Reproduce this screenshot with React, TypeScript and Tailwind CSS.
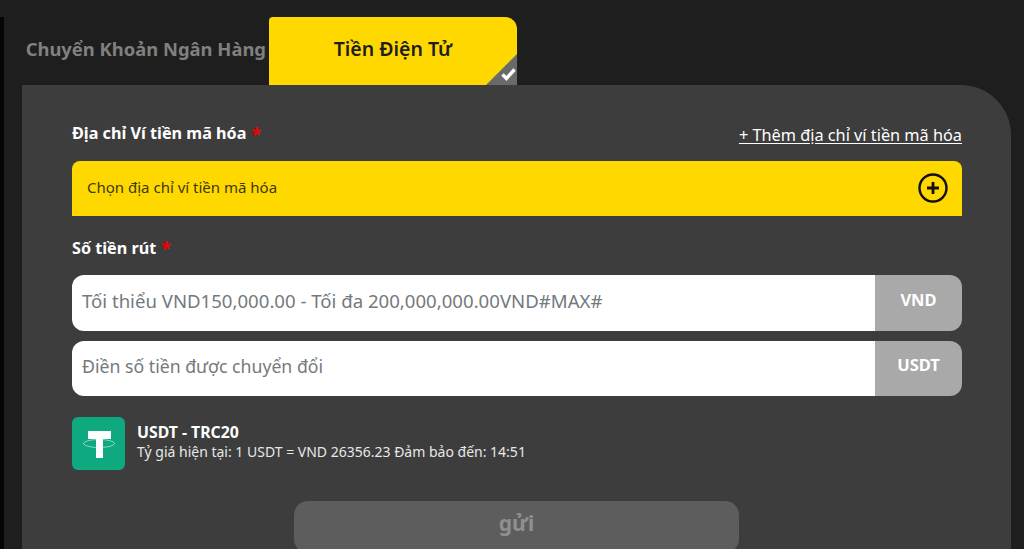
import React from "react";

function TetherLogo() {
  return (
    <div className="w-[53px] h-[53px] rounded-[6px] bg-[#0fa97f] flex items-center justify-center shrink-0">
      <svg width="53" height="53" viewBox="0 0 53 53" fill="none">
        <ellipse cx="27" cy="26.5" rx="15.5" ry="4" stroke="#fff" strokeOpacity="0.5" strokeWidth="1" />
        <path d="M16 14h23v8h-8v19h-7V22h-8z" fill="#fff" />
      </svg>
    </div>
  );
}

function AmountRow({
  placeholder,
  unit,
  height,
  textSize,
}: {
  placeholder: string;
  unit: string;
  height: string;
  textSize: string;
}) {
  return (
    <div className={`flex rounded-[12px] overflow-hidden ${height}`}>
      <div className={`flex-1 bg-white flex items-center pl-[10px] text-[#74797e] pb-[4px] ${textSize}`}>
        {placeholder}
      </div>
      <div className="w-[87px] bg-[#a9a9a9] flex items-center justify-center text-white font-bold text-[16.5px] pb-[6px]">
        {unit}
      </div>
    </div>
  );
}

function RequiredLabel({ text, className }: { text: string; className: string }) {
  return (
    <div className={`text-white font-bold text-[16.2px] flex items-center ${className}`}>
      {text}
      <span className="text-[#f00000] ml-[5px] text-[18px] leading-none">*</span>
    </div>
  );
}

export default function App() {
  return (
    <div className="h-[549px] w-[1024px] overflow-hidden bg-[#1e1e1e] flex font-['Noto_Sans',sans-serif]">
      <div className="w-[4px] mt-[17px] bg-[#020606] shrink-0" />
      <div className="pl-[18px] flex-1">
        {/* Вкладки */}
        <div className="flex pt-[17px]">
          <div className="w-[247px] h-[68px] flex items-center justify-end pr-[3px] pb-[4px] text-[#808080] font-bold text-[18.4px] whitespace-nowrap">
            Chuyển Khoản Ngân Hàng
          </div>
          <div className="relative w-[248px] h-[68px] bg-[#ffd800] rounded-tl-[4px] rounded-tr-[12px] flex items-center justify-center pb-[4px] text-[#1e1e1e] font-semibold text-[19.5px]">
            Tiền Điện Tử
            <svg className="absolute right-0 bottom-0" width="31" height="31" viewBox="0 0 31 31" fill="none">
              <path d="M31 0v31H0z" fill="#6a6a6a" />
              <path d="M16.5 20.5l4 4 8-9" stroke="#fff" strokeWidth="3.4" />
            </svg>
          </div>
        </div>

        {/* Форма */}
        <div className="w-[989px] h-[480px] bg-[#3d3d3d] rounded-tr-[50px] pl-[50px] pr-[49px] pt-[39px]">
          <div className="flex items-center justify-between h-[20px] mb-[17px]">
            <RequiredLabel text="Địa chỉ Ví tiền mã hóa" className="pb-[1px]" />
            <div className="text-white text-[16.3px] underline underline-offset-2 pt-[2px]">
              + Thêm địa chỉ ví tiền mã hóa
            </div>
          </div>

          <div className="h-[55px] bg-[#ffd800] rounded-t-[8px] flex items-center justify-between pl-[15px] pr-[14px] pb-[2px] text-[15px] text-[#3a3a10]">
            <span>Chọn địa chỉ ví tiền mã hóa</span>
            <svg width="30" height="30" viewBox="0 0 30 30" fill="none" stroke="#111" strokeWidth="2.4">
              <circle cx="15" cy="15" r="13.5" />
              <path d="M15 9v12M9 15h12" strokeWidth="2.8" />
            </svg>
          </div>

          <RequiredLabel text="Số tiền rút" className="h-[20px] mt-[22px] mb-[17px]" />

          <div className="flex flex-col gap-[10px]">
            <AmountRow
              placeholder="Tối thiểu VND150,000.00 - Tối đa 200,000,000.00VND#MAX#"
              unit="VND"
              height="h-[56px]"
              textSize="text-[18.6px]"
            />
            <AmountRow placeholder="Điền số tiền được chuyển đổi" unit="USDT" height="h-[55px]" textSize="text-[17.7px]" />
          </div>

          <div className="flex items-center gap-[12px] mt-[21px]">
            <TetherLogo />
            <div className="text-white pb-[4px]">
              <div className="font-bold text-[15.8px] leading-[20px]">USDT - TRC20</div>
              <div className="text-[14px] leading-[20px] text-[#e8e8e8]">
                Tỷ giá hiện tại: 1 USDT = VND 26356.23 Đảm bảo đến: 14:51
              </div>
            </div>
          </div>

          <div className="w-[445px] h-[52px] mt-[31px] ml-[222px] rounded-[14px] bg-[#5d5d5d] flex items-center justify-center text-[#8f8f8f] font-bold text-[21px] pb-[6px]">
            gửi
          </div>
        </div>
      </div>
    </div>
  );
}
